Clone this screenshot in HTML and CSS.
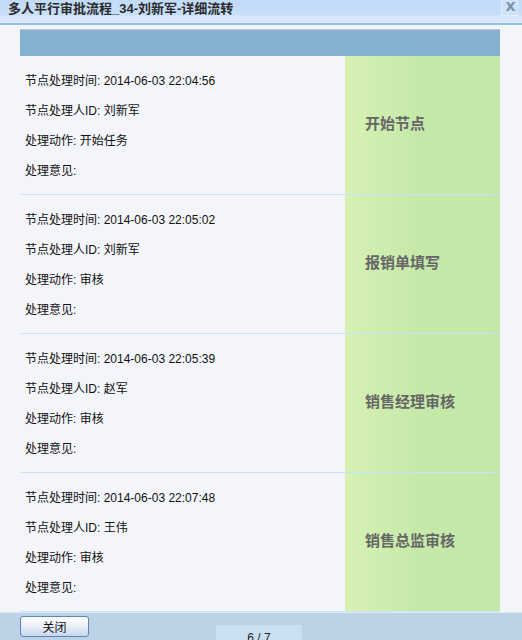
FILE: index.html
```html
<!DOCTYPE html>
<html>
<head>
    <meta charset="utf-8" />
    <title>多人平行审批流程_34-刘新军-详细流转</title>
    <link rel="stylesheet" href="styles.css">
</head>
<body>
    <div class="title-bar">
        <span class="title">多人平行审批流程_34-刘新军-详细流转</span>
        <span class="close-x">X</span>
    </div>
    <div class="content">
        <div class="flow">
            <div class="flow-head"></div>
            <div class="flow-row">
                <div class="info">
                    <div>节点处理时间: 2014-06-03 22:04:56</div>
                    <div>节点处理人ID: 刘新军</div>
                    <div>处理动作: 开始任务</div>
                    <div>处理意见:</div>
                </div>
                <div class="node">开始节点</div>
            </div>
            <div class="flow-row">
                <div class="info">
                    <div>节点处理时间: 2014-06-03 22:05:02</div>
                    <div>节点处理人ID: 刘新军</div>
                    <div>处理动作: 审核</div>
                    <div>处理意见:</div>
                </div>
                <div class="node">报销单填写</div>
            </div>
            <div class="flow-row">
                <div class="info">
                    <div>节点处理时间: 2014-06-03 22:05:39</div>
                    <div>节点处理人ID: 赵军</div>
                    <div>处理动作: 审核</div>
                    <div>处理意见:</div>
                </div>
                <div class="node">销售经理审核</div>
            </div>
            <div class="flow-row">
                <div class="info">
                    <div>节点处理时间: 2014-06-03 22:07:48</div>
                    <div>节点处理人ID: 王伟</div>
                    <div>处理动作: 审核</div>
                    <div>处理意见:</div>
                </div>
                <div class="node">销售总监审核</div>
            </div>
        </div>
    </div>
    <div class="footer">
        <button class="close-button">关闭</button>
        <div class="pager">6 / 7</div>
    </div>
</body>
</html>
```

FILE: styles.css
```css
body {
    margin: 0;
    padding: 0;
    width: 522px;
    height: 640px;
    overflow: hidden;
    background-color: #f4f5fa;
    font-family: "Liberation Sans", "Noto Sans CJK SC", sans-serif;
    font-size: 12px;
    color: #111;
    display: flex;
    flex-direction: column;
}

.title-bar {
    height: 23px;
    background: linear-gradient(to bottom, #c2dbf9 0, #c8dffa 15px, #d8e7f9 16px, #d8e7f9 23px);
    border-bottom: 2px solid #8fc1e6;
    display: flex;
    justify-content: space-between;
    align-items: flex-start;
    padding-left: 8px;
}

.title {
    font-size: 13px;
    font-weight: bold;
    color: #2b2b2b;
    line-height: 16px;
    margin-top: 1px;
}

.close-x {
    width: 17px;
    height: 15px;
    margin-right: 3px;
    border-left: 1px solid #e6eefa;
    border-bottom: 1px solid #e6eefa;
    background-color: #cfe2fa;
    color: #7b8ea8;
    font-family: "DejaVu Sans", sans-serif;
    font-weight: bold;
    font-size: 13px;
    line-height: 13px;
    text-align: center;
}

.content {
    flex: 1;
    padding: 4px 22px 0 20px;
    overflow: hidden;
}

.flow-head {
    height: 26px;
    background-color: #85b1d0;
    border-top: 1px solid #c4c8cc;
}

.flow-row {
    display: flex;
    height: 138px;
    border-bottom: 1px solid #c6e4f4;
}

.info {
    flex: 1;
    padding: 10px 0 0 5px;
    line-height: 30px;
}

.node {
    width: 155px;
    display: flex;
    align-items: center;
    padding: 0 0 5px 20px;
    box-sizing: border-box;
    background: linear-gradient(to right, #d7f1b4, #c6e9aa 45%, #c3e8a8);
    color: #666;
    font-family: "Noto Sans CJK SC", sans-serif;
    font-size: 15px;
    font-weight: bold;
}

.footer {
    height: 27px;
    background-color: #bcd3e6;
    border-top: 1px solid #dfe9f2;
    display: flex;
    align-items: flex-start;
    padding-left: 20px;
}

.close-button {
    width: 69px;
    height: 21px;
    margin-top: 3px;
    border: 1px solid #5b86c2;
    border-radius: 3px;
    background: linear-gradient(to bottom, #ffffff, #e9eef8 50%, #c9d6ec);
    font-family: "Noto Sans CJK SC", sans-serif;
    font-size: 12px;
    color: #111;
    padding: 0;
}

.pager {
    width: 86px;
    height: 15px;
    margin: 12px 0 0 127px;
    background-color: #cadff0;
    text-align: center;
    line-height: 26px;
    overflow: hidden;
    color: #222;
}
```
